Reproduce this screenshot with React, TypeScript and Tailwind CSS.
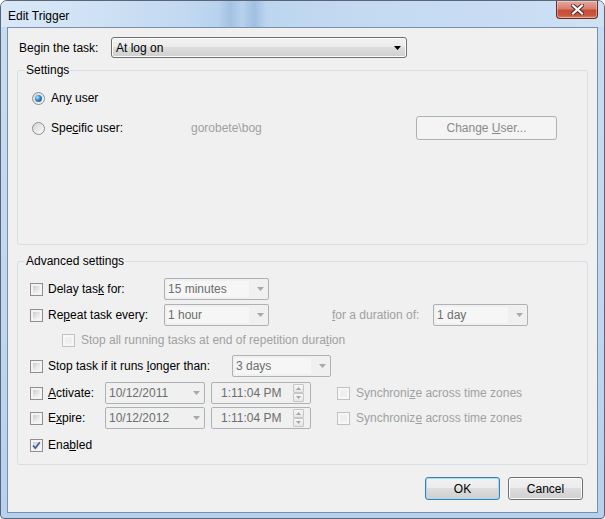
import React from "react";

function Arrow({ disabled }: { disabled?: boolean }) {
  return (
    <svg width="7" height="4" viewBox="0 0 7 4" className="shrink-0">
      <path d="M0 0H7L3.5 4Z" fill={disabled ? "#a8a8a8" : "#000"} />
    </svg>
  );
}

function Check({ checked, disabled }: { checked?: boolean; disabled?: boolean }) {
  return (
    <div
      className={`relative w-[13px] h-[13px] shrink-0 border p-[2px] ${
        disabled ? "border-[#c2c2c2] bg-[#f7f7f7]" : "border-[#8e8f8f] bg-[#f4f4f4]"
      }`}
    >
      <div
        className={`w-full h-full ${
          disabled
            ? "bg-[#efefef]"
            : "bg-[linear-gradient(135deg,#c9ccd1_0%,#e3e5e8_50%,#f7f7f7_100%)]"
        }`}
      />
      {checked && (
        <svg width="11" height="11" viewBox="0 0 11 11" className="absolute left-0 top-0">
          <path d="M2 5.5 L4.3 8 L8.8 2.2" fill="none" stroke="#4a5f97" strokeWidth="1.8" />
        </svg>
      )}
    </div>
  );
}

function Radio({ checked }: { checked?: boolean }) {
  return (
    <div className="w-[13px] h-[13px] shrink-0 rounded-full border border-[#8e8f8f] bg-[linear-gradient(135deg,#d3d5d8,#fbfbfb)] flex items-center justify-center">
      {checked && (
        <div className="w-[7px] h-[7px] rounded-full bg-[radial-gradient(circle_at_35%_35%,#b4e2fa_0%,#2d86cf_45%,#0d4f8f_100%)]" />
      )}
    </div>
  );
}

function Combo({ value, w, plain }: { value: string; w: string; plain?: boolean }) {
  return (
    <div
      className={`${w} h-[22px] shrink-0 flex items-center border border-[#adb2b5] rounded-[2px] bg-[#f0f0f0] pl-[2px] pr-[4px]`}
    >
      <div
        className={`flex-1 h-[16px] leading-[16px] pl-[1px] mr-[8px] text-[#6d6d6d] ${
          plain ? "" : "bg-[#f6f6f6]"
        }`}
      >
        {value}
      </div>
      <Arrow disabled />
    </div>
  );
}

function SpinBtn({ up }: { up?: boolean }) {
  return (
    <div className="h-[9px] w-[11px] border border-[#c6c6c6] rounded-[1px] bg-[linear-gradient(#f7f7f7,#e6e6e6)] flex items-center justify-center">
      <svg width="5" height="3" viewBox="0 0 5 3">
        <path d={up ? "M0 3H5L2.5 0Z" : "M0 0H5L2.5 3Z"} fill="#a8a8a8" />
      </svg>
    </div>
  );
}

function TimeBox({ value }: { value: string }) {
  return (
    <div className="ml-[6px] w-[100px] h-[22px] shrink-0 flex items-center border border-[#adb2b5] rounded-[2px] bg-[#f0f0f0] pl-[9px] pr-[6px]">
      <div className="flex-1 text-[#6d6d6d] leading-[16px]">{value}</div>
      <div className="flex flex-col">
        <SpinBtn up />
        <SpinBtn />
      </div>
    </div>
  );
}

function Group({ label, h, children }: { label: string; h: string; children: React.ReactNode }) {
  return (
    <div className={`relative ml-[9px] w-[571px] ${h} border border-[#d5dfe5] rounded-[3px]`}>
      <span className="absolute -top-[9px] left-[7px] px-[1px] bg-[#f0f0f0] leading-[16px] text-black">
        {label}
      </span>
      {children}
    </div>
  );
}

const grayBtn =
  "bg-[linear-gradient(#f2f2f2_0%,#ebebeb_49%,#dddddd_50%,#cfcfcf_100%)] shadow-[inset_0_0_0_1px_#fbfbfb]";

export default function App() {
  return (
    <div className="w-[605px] h-[519px] flex flex-col overflow-hidden rounded-t-[7px] rounded-b-[4px] border border-[#5a6677] bg-[linear-gradient(180deg,#c6dcf2_0%,#bfd7f0_60%,#b6d1ee_100%)] font-['Liberation_Sans',Arial,sans-serif] text-[12px] text-black">
      {/* Title bar */}
      <div className="h-[26px] shrink-0 flex items-start bg-[linear-gradient(90deg,#d9e8f7_0%,#cfe2f5_15%,#c2d9f1_30%,#b9d2ee_36%,#a3c2e3_38%,#b8d1ec_40%,#9fbfe2_42%,#bdd5ef_44%,#c4daf1_60%,#c8ddf3_85%,#cfe2f5_100%)]">
        <span className="pl-[7px] pt-[7px] leading-[16px] text-black">Edit Trigger</span>
        <div className="ml-auto mr-[6px] w-[42px] h-[18px] rounded-b-[4px] border border-t-0 border-[#6b2a22] bg-[linear-gradient(180deg,#e7a89c_0%,#d8806f_45%,#c74b36_55%,#c9583f_85%,#dd8b6f_100%)] shadow-[inset_0_0_0_1px_rgba(255,255,255,0.35)] flex items-center justify-center">
          <svg width="13" height="11" viewBox="0 0 13 11">
            <path d="M2 1.5 L11 9.5 M11 1.5 L2 9.5" stroke="#4a2a2a" strokeWidth="4" strokeLinecap="square" />
            <path d="M2 1.5 L11 9.5 M11 1.5 L2 9.5" stroke="#ffffff" strokeWidth="2.2" strokeLinecap="square" />
          </svg>
        </div>
      </div>

      {/* Client area */}
      <div className="flex-1 ml-[6px] mr-[6px] mb-[5px] border border-[#7b8ea5] bg-[#f0f0f0] flex flex-col">
        {/* Begin the task */}
        <div className="mt-[9px] h-[21px] flex items-center pl-[11px]">
          <span className="w-[92px] shrink-0 leading-[16px]">
            Be<u>g</u>in the task:
          </span>
          <div className="w-[296px] h-[21px] flex items-center border border-[#707070] rounded-[3px] bg-[linear-gradient(#f2f2f2_0%,#ebebeb_49%,#dddddd_50%,#cfcfcf_100%)] shadow-[inset_0_0_0_1px_#fbfbfb] pl-[4px] pr-[5px]">
            <span className="flex-1 leading-[16px]">At log on</span>
            <Arrow />
          </div>
        </div>

        {/* Settings */}
        <div className="mt-[12px]">
          <Group label="Settings" h="h-[175px]">
            <div className="mt-[16px] h-[22px] flex items-center pl-[14px]">
              <Radio checked />
              <span className="ml-[6px] leading-[16px]">
                An<u>y</u> user
              </span>
            </div>
            <div className="mt-[7px] h-[24px] flex items-center pl-[14px]">
              <div className="w-[159px] shrink-0 flex items-center">
                <Radio />
                <span className="ml-[6px] leading-[16px]">
                  Spe<u>c</u>ific user:
                </span>
              </div>
              <span className="w-[225px] shrink-0 text-[#a0a0a0] leading-[16px]">gorobete\bog</span>
              <div className="w-[141px] h-[24px] border border-[#adb2b5] rounded-[3px] bg-[#f4f4f4] flex items-center justify-center text-[#8a8a8a] leading-[16px]">
                <span>
                  Change <u>U</u>ser...
                </span>
              </div>
            </div>
          </Group>
        </div>

        {/* Advanced settings */}
        <div className="mt-[16px]">
          <Group label="Advanced settings" h="h-[204px]">
            <div className="pl-[12px]">
              <div className="mt-[16px] h-[22px] flex items-center">
                <div className="w-[134px] shrink-0 flex items-center">
                  <Check />
                  <span className="ml-[5px] leading-[16px]">
                    Delay tas<u>k</u> for:
                  </span>
                </div>
                <Combo value="15 minutes" w="w-[105px]" />
              </div>

              <div className="mt-[4px] h-[22px] flex items-center">
                <div className="w-[134px] shrink-0 flex items-center">
                  <Check />
                  <span className="ml-[5px] leading-[16px]">
                    Re<u>p</u>eat task every:
                  </span>
                </div>
                <Combo value="1 hour" w="w-[105px]" />
                <span className="ml-[63px] w-[101px] shrink-0 text-[#a0a0a0] leading-[16px]">
                  <u>f</u>or a duration of:
                </span>
                <Combo value="1 day" w="w-[95px]" />
              </div>

              <div className="mt-[3px] h-[22px] flex items-center pl-[32px]">
                <Check disabled />
                <span className="ml-[6px] text-[#a0a0a0] leading-[16px]">
                  Stop all running tasks at end of repetition dura<u>t</u>ion
                </span>
              </div>

              <div className="mt-[4px] h-[22px] flex items-center">
                <div className="w-[202px] shrink-0 flex items-center">
                  <Check />
                  <span className="ml-[5px] leading-[16px]">
                    Stop task if it runs <u>l</u>onger than:
                  </span>
                </div>
                <Combo value="3 days" w="w-[99px]" />
              </div>

              <div className="mt-[5px] h-[22px] flex items-center">
                <div className="w-[75px] shrink-0 flex items-center">
                  <Check />
                  <span className="ml-[5px] leading-[16px]">
                    <u>A</u>ctivate:
                  </span>
                </div>
                <Combo value="10/12/2011" w="w-[100px]" plain />
                <TimeBox value="1:11:04 PM" />
                <div className="ml-[26px]">
                  <Check disabled />
                </div>
                <span className="ml-[6px] text-[#a0a0a0] leading-[16px]">
                  Synchroni<u>z</u>e across time zones
                </span>
              </div>

              <div className="mt-[3px] h-[22px] flex items-center">
                <div className="w-[75px] shrink-0 flex items-center">
                  <Check />
                  <span className="ml-[5px] leading-[16px]">
                    E<u>x</u>pire:
                  </span>
                </div>
                <Combo value="10/12/2012" w="w-[100px]" plain />
                <TimeBox value="1:11:04 PM" />
                <div className="ml-[26px]">
                  <Check disabled />
                </div>
                <span className="ml-[6px] text-[#a0a0a0] leading-[16px]">
                  Synchroniz<u>e</u> across time zones
                </span>
              </div>

              <div className="mt-[5px] h-[22px] flex items-center">
                <Check checked />
                <span className="ml-[5px] leading-[16px]">
                  Ena<u>b</u>led
                </span>
              </div>
            </div>
          </Group>
        </div>

        {/* Buttons */}
        <div className="mt-[12px] flex justify-end gap-[8px] pr-[14px]">
          <div className="w-[75px] h-[23px] rounded-[3px] border border-[#3c7fb1] bg-[linear-gradient(#f2f2f2_0%,#ebebeb_49%,#dddddd_50%,#cfcfcf_100%)] shadow-[inset_0_0_0_1px_#9fdcf8] flex items-center justify-center leading-[16px]">
            OK
          </div>
          <div className={`w-[75px] h-[23px] rounded-[3px] border border-[#707070] ${grayBtn} flex items-center justify-center leading-[16px]`}>
            Cancel
          </div>
        </div>
      </div>
    </div>
  );
}
